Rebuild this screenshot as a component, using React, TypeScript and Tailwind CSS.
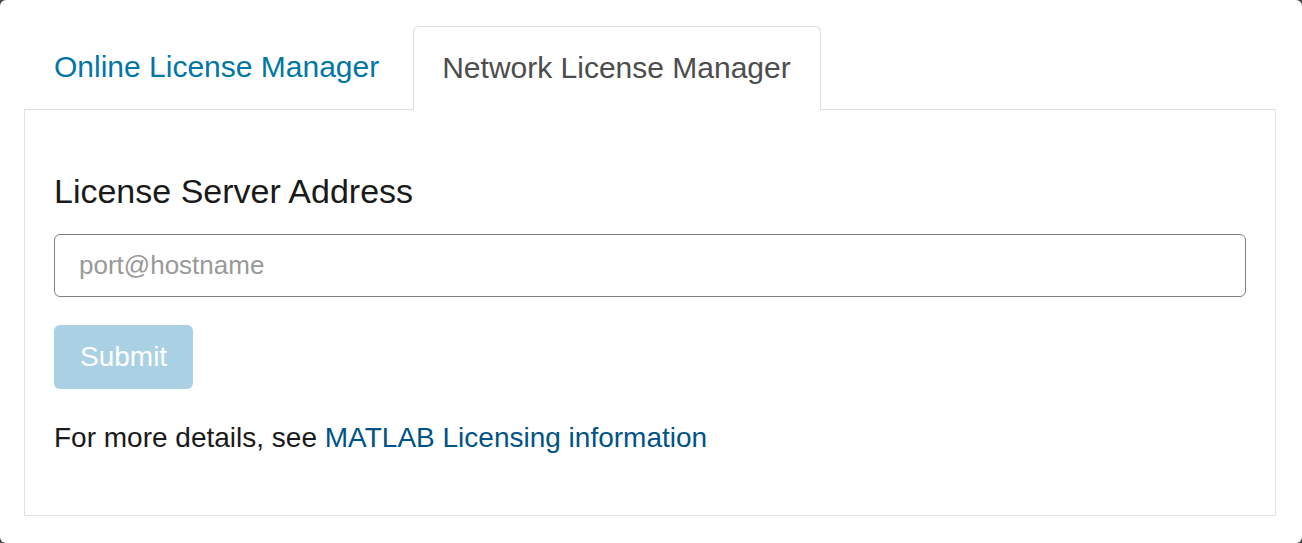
import { useState } from "react";

export default function App() {
  const [tab, setTab] = useState<"online" | "network">("network");
  const [address, setAddress] = useState("");

  return (
    <div
      className="h-screen bg-[#474747]"
      style={{ fontFamily: '"Liberation Sans", Arial, sans-serif' }}
    >
      <div className="h-full rounded-[6px] bg-white pl-[24px] pr-[26px] pt-[26px]">
        <div className="flex border-b border-[#dddddd]">
          <button
            onClick={() => setTab("online")}
            className={
              tab === "online"
                ? "mr-[3px] -mb-px flex h-[84px] items-center rounded-t-[6px] border border-[#dddddd] border-b-white bg-white pb-[2px] pl-[28px] pr-[29px] text-[30px] text-[#4d4d4d]"
                : "mr-[3px] flex h-[83px] items-center pb-[2px] pl-[30px] pr-[31px] text-[30px] text-[#0076a8]"
            }
          >
            Online License Manager
          </button>
          <button
            onClick={() => setTab("network")}
            className={
              tab === "network"
                ? "-mb-px flex h-[84px] items-center rounded-t-[6px] border border-[#dddddd] border-b-white bg-white pb-[2px] pl-[28px] pr-[29px] text-[30px] text-[#4d4d4d]"
                : "flex h-[83px] items-center pb-[2px] pl-[30px] pr-[31px] text-[30px] text-[#0076a8]"
            }
          >
            Network License Manager
          </button>
        </div>

        <div className="border border-t-0 border-[#e3e3e3] px-[29px] pb-[57px] pt-[61px]">
          <h2 className="mb-[23px] text-[34px] leading-[40px] text-[#1a1a1a]">
            License Server Address
          </h2>
          <input
            value={address}
            onChange={(e) => setAddress(e.target.value)}
            placeholder="port@hostname"
            className="block h-[63px] w-full rounded-[6px] border border-[#808080] px-[24px] text-[26px] text-[#1a1a1a] outline-none placeholder:text-[#999999]"
          />
          <button
            disabled={!address}
            className="mt-[28px] h-[64px] rounded-[6px] bg-[#a9d1e3] px-[26px] text-[28px] text-white"
          >
            Submit
          </button>
          <p className="mt-[29px] text-[28px] leading-[40px] text-[#1a1a1a]">
            For more details, see{" "}
            <a href="#" className="text-[#005387]">
              MATLAB Licensing information
            </a>
          </p>
        </div>
      </div>
    </div>
  );
}
